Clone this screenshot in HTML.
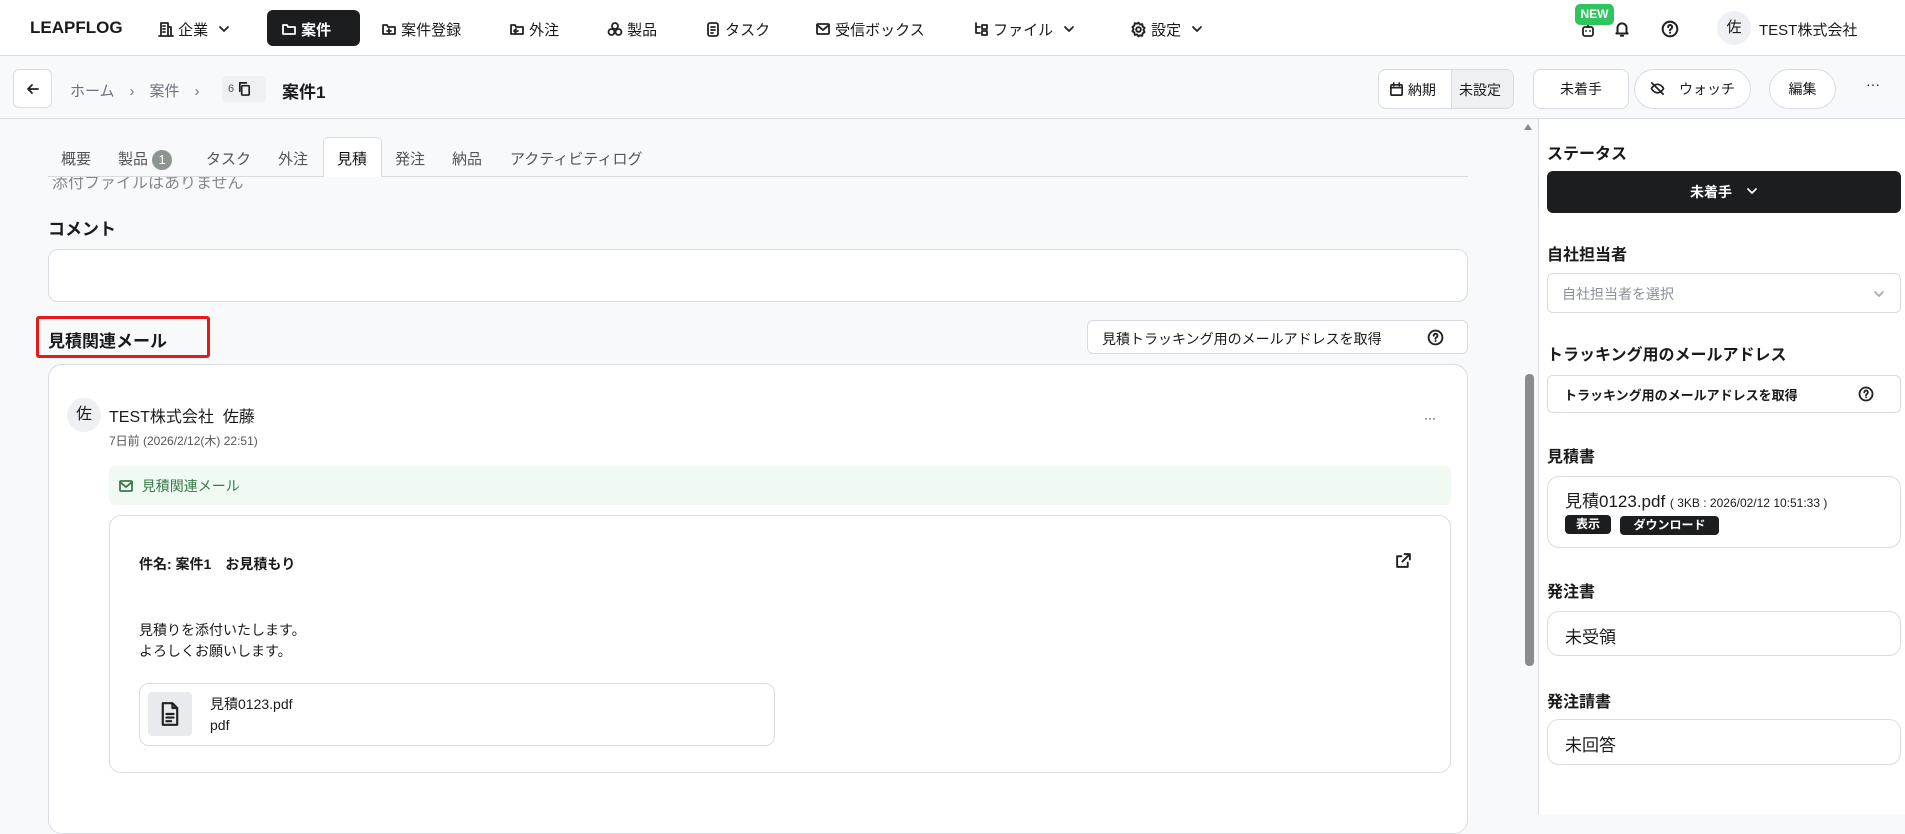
<!DOCTYPE html>
<html><head><meta charset="utf-8"><style>
*{box-sizing:border-box;margin:0;padding:0}
body{width:1905px;height:814px;overflow:hidden;background:#f8f9fb;font-family:"Liberation Sans","Noto Sans CJK JP",sans-serif;color:#1a1a1a;position:relative;font-size:15px}
.a{position:absolute;white-space:nowrap}
.box{position:absolute;background:#fff;border:1px solid #d8dce2;border-radius:10px}
svg{fill:none;stroke:#222;stroke-width:1.8;stroke-linecap:round;stroke-linejoin:round}
.b{font-weight:700}
</style></head><body>
<!-- top nav -->
<div class="a" style="left:0;top:0;width:1905px;height:56px;background:#fff;border-bottom:1px solid #d8dce2"></div>
<div class="a b" style="left:30px;top:18px;font-size:17px">LEAPFLOG</div>
<div class="a" style="left:158px;top:19px">
<svg width="16" height="16" viewBox="0 0 16 16" style="vertical-align:-2px"><path d="M3 15V2h7v13M10 6h3v9M1 15h14M5 5h2M5 8h2M5 11h2"/></svg> 企業 <svg width="12" height="12" viewBox="0 0 12 12" style="margin-left:6px"><path d="M2 4l4 4 4-4"/></svg></div>
<div class="a" style="left:267px;top:10px;width:93px;height:36px;background:#1c1d1f;border-radius:6px;color:#fff;padding:9px 0 0 14px"><svg width="16" height="16" viewBox="0 0 16 16" style="stroke:#fff;vertical-align:-2px"><path d="M2 4h4l1 2h7v7H2z"/></svg> <b>案件</b></div>
<div class="a" style="left:381px;top:19px"><svg width="16" height="16" viewBox="0 0 16 16" style="vertical-align:-2px"><path d="M2 4h4l1 2h7v7H2zM8 8v4M6 10h4"/></svg> 案件登録</div>
<div class="a" style="left:509px;top:19px"><svg width="16" height="16" viewBox="0 0 16 16" style="vertical-align:-2px"><path d="M2 4h4l1 2h7v7H2zM9 10H5M7 8l-2 2 2 2"/></svg> 外注</div>
<div class="a" style="left:607px;top:19px"><svg width="16" height="16" viewBox="0 0 16 16" style="vertical-align:-2px"><circle cx="8" cy="5" r="3"/><circle cx="4.5" cy="11" r="3"/><circle cx="11.5" cy="11" r="3"/></svg> 製品</div>
<div class="a" style="left:705px;top:19px"><svg width="16" height="16" viewBox="0 0 16 16" style="vertical-align:-2px"><rect x="3" y="2" width="10" height="13" rx="2"/><path d="M6 6h4M6 9h4M6 12h2"/></svg> タスク</div>
<div class="a" style="left:815px;top:19px"><svg width="16" height="16" viewBox="0 0 16 16" style="vertical-align:-2px"><rect x="2" y="3" width="12" height="10" rx="1"/><path d="M2 4l6 5 6-5"/></svg> 受信ボックス</div>
<div class="a" style="left:973px;top:19px"><svg width="16" height="16" viewBox="0 0 16 16" style="vertical-align:-2px"><path d="M3 2v10h4M3 6h4M9 4h5v4H9zM9 10h5v4H9z"/></svg> ファイル <svg width="12" height="12" viewBox="0 0 12 12" style="margin-left:6px"><path d="M2 4l4 4 4-4"/></svg></div>
<div class="a" style="left:1130px;top:19px"><svg width="17" height="17" viewBox="0 0 16 16" style="vertical-align:-3px"><circle cx="8" cy="8" r="2.2"/><path d="M8 1.5l1.3 1.8 2.2-.4.4 2.2 1.8 1.3-1 2 1 2-1.8 1.3-.4 2.2-2.2-.4L8 14.5l-1.3-1.8-2.2.4-.4-2.2-1.8-1.3 1-2-1-2 1.8-1.3.4-2.2 2.2.4z"/></svg> 設定 <svg width="12" height="12" viewBox="0 0 12 12" style="margin-left:6px"><path d="M2 4l4 4 4-4"/></svg></div>
<svg class="a" style="left:1580px;top:22px" width="16" height="16" viewBox="0 0 16 16"><rect x="3" y="5" width="10" height="9" rx="2"/><path d="M8 2v3M6 9h.1M10 9h.1"/></svg>
<div class="a b" style="left:1575px;top:4px;width:39px;height:21px;background:#2fc45e;color:#fff;border-radius:5px;font-size:12px;text-align:center;line-height:21px">NEW</div>
<svg class="a" style="left:1613px;top:20px" width="18" height="18" viewBox="0 0 16 16"><path d="M4 11V7a4 4 0 018 0v4l1 1H3zM7 14h2"/></svg>
<svg class="a" style="left:1661px;top:20px" width="18" height="18" viewBox="0 0 16 16"><circle cx="8" cy="8" r="6.5"/><path d="M6.3 6.3a1.8 1.8 0 113 1.3c-.8.5-1.3.8-1.3 1.6M8 11.3h.1"/></svg>
<div class="a" style="left:1717px;top:11px;width:34px;height:34px;border-radius:50%;background:#eef0f3;text-align:center;line-height:34px">佐</div>
<div class="a" style="left:1759px;top:19px">TEST株式会社</div>
<!-- 2nd bar -->
<div class="a" style="left:0;top:118px;width:1905px;height:1px;background:#d8dce2"></div>
<div class="box" style="left:13px;top:69px;width:39px;height:39px;border-radius:6px"><svg class="a" style="left:11px;top:11px" width="16" height="16" viewBox="0 0 16 16"><path d="M13 8H3M7 4L3 8l4 4"/></svg></div>
<div class="a" style="left:70px;top:80px;color:#6b7280;font-size:15px">ホーム　›　案件　›</div>
<div class="a" style="left:222px;top:76px;width:44px;height:26px;background:#eef0f3;border-radius:4px;font-size:11px;padding:5px 0 0 6px;color:#555">6 <svg width="15" height="15" viewBox="0 0 16 16" style="vertical-align:-4px"><rect x="5" y="5" width="8" height="10" rx="1"/><path d="M3 11V2h7"/></svg></div>
<div class="a b" style="left:282px;top:78px;font-size:17px">案件1</div>
<div class="box" style="left:1378px;top:69px;width:136px;height:40px;border-radius:8px;overflow:hidden">
<div class="a" style="left:10px;top:10px;font-size:14px"><svg width="15" height="15" viewBox="0 0 16 16" style="vertical-align:-2px"><rect x="2" y="3" width="12" height="11" rx="1"/><path d="M2 6h12M5 1v3M11 1v3"/></svg> 納期</div>
<div class="a" style="left:72px;top:0;width:64px;height:40px;background:#eef0f3;border-left:1px solid #d8dce2;padding:10px 0 0 7px;font-size:14px">未設定</div></div>
<div class="box" style="left:1533px;top:69px;width:96px;height:40px;border-radius:8px;text-align:center;line-height:38px;font-size:14px">未着手</div>
<div class="box" style="left:1634px;top:69px;width:117px;height:40px;border-radius:20px;text-align:center;line-height:38px;font-size:14px"><svg width="15" height="15" viewBox="0 0 16 16" style="vertical-align:-2px"><path d="M1.5 8S4 3.5 8 3.5 14.5 8 14.5 8 12 12.5 8 12.5 1.5 8 1.5 8zM2 2l12 12"/></svg>　ウォッチ</div>
<div class="box" style="left:1769px;top:69px;width:67px;height:40px;border-radius:20px;text-align:center;line-height:38px;font-size:14px">編集</div>
<div class="a" style="left:1866px;top:76px;font-size:14px">···</div>
<!-- right panel -->
<div class="a" style="left:1538px;top:119px;width:367px;height:695px;background:#fff;border-left:1px solid #d8dce2"></div>
<div class="a" style="left:1524px;top:124px;width:0;height:0;border:4px solid transparent;border-bottom:6px solid #888;border-top:0"></div>
<div class="a" style="left:1525px;top:374px;width:9px;height:292px;background:#8c8c8c;border-radius:4px"></div>
<div class="a b" style="left:1547px;top:140px;font-size:16px">ステータス</div>
<div class="a b" style="left:1547px;top:171px;width:354px;height:42px;background:#1c1d1f;border-radius:6px;color:#fff;text-align:center;line-height:42px;font-size:14px">未着手 <svg width="12" height="12" viewBox="0 0 12 12" style="stroke:#fff;margin-left:10px"><path d="M2 4l4 4 4-4"/></svg></div>
<div class="a b" style="left:1547px;top:241px;font-size:16px">自社担当者</div>
<div class="box" style="left:1547px;top:273px;width:354px;height:40px;border-radius:6px;padding:10px 0 0 14px;color:#8a8f98;font-size:14px">自社担当者を選択<svg class="a" style="left:325px;top:14px;stroke:#aaa" width="12" height="12" viewBox="0 0 12 12"><path d="M2 4l4 4 4-4"/></svg></div>
<div class="a b" style="left:1547px;top:341px;font-size:16px">トラッキング用のメールアドレス</div>
<div class="box" style="left:1547px;top:375px;width:354px;height:38px;border-radius:6px;padding:9px 0 0 16px;font-size:13px;font-weight:700">トラッキング用のメールアドレスを取得<svg class="a" style="left:310px;top:10px" width="16" height="16" viewBox="0 0 16 16"><circle cx="8" cy="8" r="6.5"/><path d="M6.3 6.3a1.8 1.8 0 113 1.3c-.8.5-1.3.8-1.3 1.6M8 11.3h.1"/></svg></div>
<div class="a b" style="left:1547px;top:443px;font-size:16px">見積書</div>
<div class="box" style="left:1547px;top:476px;width:354px;height:72px;border-radius:12px">
<div class="a" style="left:17px;top:10px;font-size:17px">見積0123.pdf <span style="font-size:12px">( 3KB : 2026/02/12 10:51:33 )</span></div>
<div class="a b" style="left:17px;top:38px;width:46px;height:19px;background:#1c1d1f;color:#fff;border-radius:4px;font-size:12px;text-align:center;line-height:19px">表示</div>
<div class="a b" style="left:72px;top:39px;width:99px;height:19px;background:#1c1d1f;color:#fff;border-radius:4px;font-size:12px;text-align:center;line-height:19px">ダウンロード</div></div>
<div class="a b" style="left:1547px;top:578px;font-size:16px">発注書</div>
<div class="box" style="left:1547px;top:611px;width:354px;height:45px;border-radius:12px;padding:11px 0 0 17px;font-size:17px">未受領</div>
<div class="a b" style="left:1547px;top:688px;font-size:16px">発注請書</div>
<div class="box" style="left:1547px;top:719px;width:354px;height:46px;border-radius:12px;padding:11px 0 0 17px;font-size:17px">未回答</div>
<!-- tabs -->
<div class="a" style="left:48px;top:177px;width:600px;height:20px;overflow:hidden"><div class="a" style="left:4px;top:-8px;color:#888;font-size:16px">添付ファイルはありません</div></div>
<div class="a" style="left:48px;top:176px;width:1420px;height:1px;background:#d8dce2"></div>
<div class="a" style="left:323px;top:137px;width:59px;height:40px;background:#fff;border:1px solid #d8dce2;border-bottom:none;border-radius:5px 5px 0 0"></div>
<div class="a" style="left:61px;top:148px;color:#555;font-size:15px">概要</div>
<div class="a" style="left:118px;top:148px;color:#555;font-size:15px">製品 <span style="display:inline-block;width:20px;height:20px;border-radius:50%;background:#8c958f;color:#fff;text-align:center;font-size:13px;line-height:20px">1</span></div>
<div class="a" style="left:206px;top:148px;color:#555;font-size:15px">タスク</div>
<div class="a" style="left:278px;top:148px;color:#555;font-size:15px">外注</div>
<div class="a" style="left:337px;top:148px;color:#111;font-size:15px">見積</div>
<div class="a" style="left:395px;top:148px;color:#555;font-size:15px">発注</div>
<div class="a" style="left:452px;top:148px;color:#555;font-size:15px">納品</div>
<div class="a" style="left:510px;top:148px;color:#555;font-size:15px">アクティビティログ</div>
<!-- main -->
<div class="a b" style="left:48px;top:215px;font-size:17px">コメント</div>
<div class="box" style="left:48px;top:249px;width:1420px;height:53px;border-radius:10px"></div>
<div class="a" style="left:36px;top:316px;width:174px;height:42px;border:3px solid #e81818;border-radius:3px"></div>
<div class="a b" style="left:48px;top:327px;font-size:17px">見積関連メール</div>
<div class="box" style="left:1087px;top:320px;width:381px;height:34px;border-radius:6px;padding:8px 0 0 14px;font-size:14px">見積トラッキング用のメールアドレスを取得<svg class="a" style="left:339px;top:8px" width="17" height="17" viewBox="0 0 16 16"><circle cx="8" cy="8" r="6.5"/><path d="M6.3 6.3a1.8 1.8 0 113 1.3c-.8.5-1.3.8-1.3 1.6M8 11.3h.1"/></svg></div>
<div class="box" style="left:48px;top:364px;width:1420px;height:470px;border-radius:14px"></div>
<div class="a" style="left:67px;top:398px;width:34px;height:34px;border-radius:50%;background:#eef0f3;text-align:center;line-height:34px;font-size:16px">佐</div>
<div class="a" style="left:109px;top:403px;font-size:16px">TEST株式会社&nbsp; 佐藤</div>
<div class="a" style="left:109px;top:432px;font-size:12px;color:#555">7日前 (2026/2/12(木) 22:51)</div>
<div class="a" style="left:1424px;top:411px;font-size:12px">···</div>
<div class="a" style="left:109px;top:466px;width:1342px;height:39px;background:#f0f9f2;border-radius:6px;padding:10px 0 0 9px;color:#3a7a4a;font-size:14px"><svg width="16" height="16" viewBox="0 0 16 16" style="stroke:#3a7a4a;vertical-align:-3px"><rect x="2" y="3" width="12" height="10" rx="1"/><path d="M2 4l6 5 6-5"/></svg>&nbsp; 見積関連メール</div>
<div class="box" style="left:109px;top:515px;width:1342px;height:258px;border-radius:12px"></div>
<div class="a b" style="left:139px;top:554px;font-size:14px">件名: 案件1　お見積もり</div>
<svg class="a" style="left:1395px;top:552px" width="17" height="17" viewBox="0 0 16 16"><path d="M9 2h5v5M14 2L7 9M12 10v4H2V4h4"/></svg>
<div class="a" style="left:139px;top:620px;font-size:14px;line-height:21px">見積りを添付いたします。<br>よろしくお願いします。</div>
<div class="box" style="left:139px;top:683px;width:636px;height:63px;border-radius:10px">
<div class="a" style="left:8px;top:8px;width:44px;height:44px;background:#e8eaee;border-radius:4px"><svg class="a" style="left:12px;top:10px" width="20" height="24" viewBox="0 0 16 20"><path d="M2 1h8l4 4v14H2zM10 1v4h4M5 10h6M5 13h6M5 16h4"/></svg></div>
<div class="a" style="left:70px;top:10px;font-size:14px;line-height:21px">見積0123.pdf<br>pdf</div></div>
</body></html>
